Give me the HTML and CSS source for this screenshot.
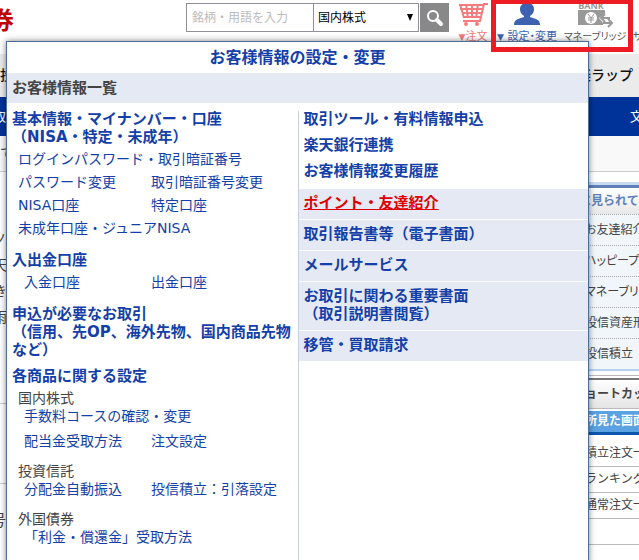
FILE: index.html
```html
<!DOCTYPE html>
<html lang="ja">
<head>
  <meta charset="UTF-8">
  <meta name="viewport" content="width=device-width, initial-scale=1.0">
  <title>お客様情報の設定・変更</title>
  <link rel="stylesheet" href="styles.css">
</head>
<body>
  <header class="header">
    <div class="logo">券</div>
    <form class="search">
      <input type="text" class="search-text" placeholder="銘柄・用語を入力" aria-label="銘柄・用語を入力">
      <div class="search-type">
        <select aria-label="検索対象">
          <option>国内株式</option>
        </select>
      </div>
      <button type="button" class="search-btn" aria-label="検索">
        <svg width="18" height="18" viewBox="0 0 18 18"><circle cx="7" cy="7" r="5" fill="none" stroke="#fff" stroke-width="2"/><path d="M11 11l4 4" stroke="#fff" stroke-width="4" stroke-linecap="round"/></svg>
      </button>
    </form>
    <nav class="tools">
      <a href="#" class="tool tool-order">
        <svg width="30" height="28" viewBox="0 0 30 28" fill="none" stroke="#f47c7c" stroke-width="2">
          <path d="M30 4h-4l-4 17H5M1 5h24M2 9h22M4 13h19M5 17h17M2 4l4 14M8 4l2 14M14 4v14M20 4l-2 14"/>
          <circle cx="8" cy="24" r="1"/><circle cx="19" cy="24" r="1"/>
        </svg>
        <span><small>▼</small>注文</span>
      </a>
      <a href="#" class="tool tool-setting">
        <svg width="26" height="28" viewBox="0 0 26 28" fill="#3f62b0">
          <path d="M13 3c5 0 7 3 7 6 0 3-1 5-4 7v1l6 2c3 1 4 3 4 6H0c0-3 1-5 4-6l6-2v-1c-3-2-4-4-4-7 0-3 2-6 7-6z"/>
        </svg>
        <span><small>▼</small> 設定・変更</span>
      </a>
      <a href="#" class="tool tool-bridge">
        <svg width="38" height="28" viewBox="0 0 38 28">
          <text x="15" y="9" text-anchor="middle" font-family="Open Sans, sans-serif" font-size="9" font-weight="bold" fill="#999">BANK</text>
          <path d="M2 10h27v4l-6 4 4 5v2H2z" fill="#999"/>
          <circle cx="15" cy="18" r="6" fill="#fff"/>
          <path d="M12 14l3 4 3-4M15 18v5M12 18h6M12 20h6" fill="none" stroke="#999" stroke-width="1"/>
          <path d="M34 18H25M29 14l-4 4 4 4M27 23h9M32 19l4 4-4 4" fill="none" stroke="#999" stroke-width="2"/>
        </svg>
        <span>マネーブリッジ</span>
      </a>
      <a href="#" class="tool tool-support"><span>サ</span></a>
    </nav>
    <div class="highlight"></div>
  </header>

  <nav class="global-nav">
    <a href="#">投</a>
    <a href="#">楽ラップ</a>
  </nav>
  <nav class="sub-nav">
    <a href="#">取</a>
    <a href="#">文</a>
  </nav>
  <div class="notice">て</div>

  <div class="contents">
    <main class="main">
      <p>ノ<br>天<br>き<br>雨</p>
      <div class="main-row"></div>
      <h2>号</h2>
    </main>
    <aside class="side">
      <section class="ranking">
        <h2>に見られて</h2>
        <ul>
          <li><a href="#">お友達紹介</a></li>
          <li><a href="#">ハッピープロ</a></li>
          <li><a href="#">マネーブリッジ</a></li>
          <li><a href="#">投信資産形</a></li>
          <li><a href="#">投信積立</a></li>
        </ul>
      </section>
      <section class="shortcut">
        <h2>ョートカット</h2>
        <h3>所見た画面</h3>
        <ul>
          <li><a href="#">積立注文一</a></li>
          <li><a href="#">ランキング</a></li>
          <li><a href="#">通常注文一</a></li>
          <li></li>
        </ul>
      </section>
    </aside>
  </div>

  <!-- 設定・変更メニュー -->
  <div class="menu">
    <h1 class="menu-title"><a href="#">お客様情報の設定・変更</a></h1>
    <h2 class="menu-band">お客様情報一覧</h2>
    <div class="menu-cols">
      <div class="menu-left">
        <h3><a href="#">基本情報・マイナンバー・口座<br>（NISA・特定・未成年）</a></h3>
        <ul class="links">
          <li class="wide"><a href="#">ログインパスワード・取引暗証番号</a></li>
          <li><a href="#">パスワード変更</a></li>
          <li><a href="#">取引暗証番号変更</a></li>
          <li><a href="#">NISA口座</a></li>
          <li><a href="#">特定口座</a></li>
          <li class="wide"><a href="#">未成年口座・ジュニアNISA</a></li>
        </ul>
        <h3><a href="#">入出金口座</a></h3>
        <ul class="links indent">
          <li><a href="#">入金口座</a></li>
          <li><a href="#">出金口座</a></li>
        </ul>
        <h3><a href="#">申込が必要なお取引<br>（信用、先OP、海外先物、国内商品先物<br>など）</a></h3>
        <h3 class="products"><a href="#">各商品に関する設定</a></h3>
        <h4>国内株式</h4>
        <ul class="links indent tight">
          <li class="wide"><a href="#">手数料コースの確認・変更</a></li>
          <li><a href="#">配当金受取方法</a></li>
          <li><a href="#">注文設定</a></li>
        </ul>
        <h4>投資信託</h4>
        <ul class="links indent tight">
          <li><a href="#">分配金自動振込</a></li>
          <li><a href="#">投信積立：引落設定</a></li>
        </ul>
        <h4>外国債券</h4>
        <ul class="links indent tight">
          <li class="wide"><a href="#">「利金・償還金」受取方法</a></li>
        </ul>
      </div>
      <div class="menu-right">
        <ul class="plain">
          <li><a href="#">取引ツール・有料情報申込</a></li>
          <li><a href="#">楽天銀行連携</a></li>
          <li><a href="#">お客様情報変更履歴</a></li>
        </ul>
        <ul class="bands">
          <li><a href="#" class="active">ポイント・友達紹介</a></li>
          <li><a href="#">取引報告書等（電子書面）</a></li>
          <li><a href="#">メールサービス</a></li>
          <li><a href="#">お取引に関わる重要書面<br>（取引説明書閲覧）</a></li>
          <li><a href="#">移管・買取請求</a></li>
        </ul>
      </div>
    </div>
  </div>
</body>
</html>
```

FILE: styles.css
```css
:root {
  --link: #143fa8;
  --band: #e5e9f4;
  --navy: #003399;
  --text: #444;
}
* {
  box-sizing: border-box;
}
body {
  margin: 0;
  position: relative;
  height: 100vh;
  overflow: hidden;
  background: #fff;
  color: var(--text);
  font-family: "DejaVu Sans", "Noto Sans CJK JP", sans-serif;
  font-size: 14px;
}
h1, h2, h3, h4, p, ul {
  margin: 0;
  padding: 0;
}
ul {
  list-style: none;
}
a {
  color: inherit;
  text-decoration: none;
}

/* header */
.header {
  position: relative;
  display: flex;
  align-items: flex-start;
  gap: 6px;
  height: 54px;
}
.logo {
  margin-left: -10px;
  margin-right: auto;
  color: #c00000;
  font-size: 24px;
  font-weight: bold;
  line-height: 42px;
}
.search {
  display: flex;
  padding-top: 3px;
}
.search-text {
  width: 128px;
  height: 29px;
  padding: 0 5px;
  border: 1px solid #909098;
  border-radius: 0;
  font-family: inherit;
  font-size: 12px;
}
.search-text::placeholder {
  color: #bbb;
}
.search-type {
  position: relative;
  margin-left: -1px;
}
.search-type::after {
  content: "";
  position: absolute;
  top: 11px;
  right: 6px;
  border: 3px solid transparent;
  border-top: 7px solid #000;
  border-bottom: 0;
}
.search-type select {
  appearance: none;
  width: 106px;
  height: 29px;
  padding: 0 4px;
  border: 1px solid #909098;
  border-radius: 0;
  background: #fff;
  color: #000;
  font-family: inherit;
  font-size: 12px;
}
.search-btn {
  display: flex;
  align-items: center;
  justify-content: center;
  width: 29px;
  height: 29px;
  margin-left: 1px;
  padding: 0;
  border: 0;
  background: #888;
}
.tools {
  display: flex;
  gap: 6px;
}
.tool {
  display: flex;
  flex-direction: column;
  align-items: center;
  font-size: 11px;
  line-height: 18px;
  white-space: nowrap;
  font-feature-settings: "palt";
}
.tool svg {
  flex-shrink: 0;
}
.tool small {
  font-size: 9px;
}
.tool-order {
  width: 36px;
  color: #f47c7c;
}
.tool-setting {
  width: 60px;
  color: #3f62b0;
}
.tool-bridge {
  width: 64px;
  color: #555;
  font-size: 10px;
}
.tool-support {
  width: 6px;
  padding-top: 28px;
  align-items: flex-start;
  overflow: hidden;
  font-size: 10px;
}
.highlight {
  position: absolute;
  top: 0;
  right: 6px;
  z-index: 20;
  width: 142px;
  height: 52px;
  border: 5px solid #ed1c24;
  border-top-width: 4px;
  pointer-events: none;
}

/* navigation */
.global-nav,
.sub-nav {
  display: flex;
  justify-content: space-between;
  white-space: nowrap;
}
.global-nav {
  padding-right: 6px;
  background: #ebebeb;
  color: #111;
  font-weight: 500;
  line-height: 43px;
}
.sub-nav {
  margin-right: -4px;
  background: var(--navy);
  color: #fff;
  font-size: 13px;
  line-height: 39px;
}
.sub-nav a:first-child {
  margin-left: -7px;
}
.notice {
  height: 36px;
  border-bottom: 1px solid #ccc;
  background: #f9f9f9;
  line-height: 34px;
}

/* contents behind the menu */
.contents {
  display: flex;
  justify-content: space-between;
}
.main {
  flex: 1;
  padding-top: 54px;
}
.main p {
  height: 178px;
  margin-left: -7px;
  line-height: 26px;
  border-bottom: 1px solid #ccc;
}
.main-row {
  height: 80px;
  border-bottom: 1px solid #ccc;
}
.main h2 {
  margin-left: -10px;
  font-size: 16px;
  font-weight: normal;
  line-height: 74px;
}
.side {
  width: 60px;
  padding-top: 10px;
  overflow: hidden;
  white-space: nowrap;
  font-size: 12px;
}
.side h2,
.side h3 {
  font-size: 12px;
}
.ranking {
  border-top: 3px solid #c9dcf0;
  border-bottom: 2px solid #b4d0ea;
}
.ranking h2 {
  border-top: 3px solid #5f80b8;
  background: linear-gradient(#fff, #e8e8e8);
  color: #5f80b8;
  line-height: 26px;
}
.ranking li {
  padding-left: 6px;
  border-top: 1px dotted #aaa;
  background: #f1f6fb;
  line-height: 30px;
  font-feature-settings: "palt";
}
.shortcut {
  margin-top: 4px;
  border-top: 1px solid #bbb;
}
.shortcut h2 {
  margin-top: 2px;
  padding-left: 6px;
  border-top: 2px solid #777;
  border-bottom: 1px solid #bbb;
  background: linear-gradient(#fff, #e4e4e4);
  line-height: 28px;
}
.shortcut h3 {
  margin-top: 2px;
  padding-left: 6px;
  border-bottom: 3px solid #0d56ad;
  background: #5aa2e2;
  color: #fff;
  line-height: 21px;
}
.shortcut ul {
  padding-top: 6px;
}
.shortcut li {
  height: 26px;
  padding-left: 6px;
  border-bottom: 1px solid #bbb;
  line-height: 24px;
}

/* menu */
.menu {
  position: absolute;
  top: 41px;
  left: 6px;
  right: 50px;
  bottom: -10px;
  z-index: 10;
  display: flex;
  flex-direction: column;
  border: 1px solid #4a6d9c;
  background: #fff;
  color: var(--link);
  box-shadow: 0 0 6px rgba(0, 0, 0, 0.5);
}
.menu-title {
  font-size: 16px;
  line-height: 31px;
  text-align: center;
}
.menu-band {
  padding: 0 5px;
  background: var(--band);
  color: var(--text);
  font-size: 15px;
  line-height: 30px;
}
.menu-cols {
  flex: 1;
  display: grid;
  grid-template-columns: 1fr 1fr;
}
.menu-left {
  padding: 7px 0 0 5px;
}
.menu-left h3 {
  font-size: 15px;
  line-height: 18px;
  white-space: nowrap;
}
.links + h3 {
  margin-top: 11px;
}
.menu-left .products {
  margin: 8px 0 4px;
}
.menu-left h4 {
  padding-left: 6px;
  color: var(--text);
  font-size: 14px;
  font-weight: normal;
  line-height: 18px;
}
.links {
  display: grid;
  grid-template-columns: 133px 1fr;
  padding: 2px 0 0 6px;
  line-height: 23px;
  white-space: nowrap;
}
.links .wide {
  grid-column: 1 / 3;
}
.links.indent {
  grid-template-columns: 127px 1fr;
  padding-left: 12px;
}
.links.tight {
  row-gap: 7px;
  padding-top: 0;
  line-height: 18px;
}
.links.tight + h4 {
  margin-top: 12px;
}
.menu-right {
  margin-top: 8px;
  border-left: 1px solid #c8cfe0;
  font-size: 15px;
  font-weight: bold;
}
.plain {
  margin-top: -5px;
  padding: 0 5px 5px;
  line-height: 26px;
}
.bands li {
  padding: 5px 5px 7px;
  border-bottom: 1px solid #fff;
  background: var(--band);
  line-height: 18px;
}
.active {
  color: #e00000;
  text-decoration: underline;
}
```
